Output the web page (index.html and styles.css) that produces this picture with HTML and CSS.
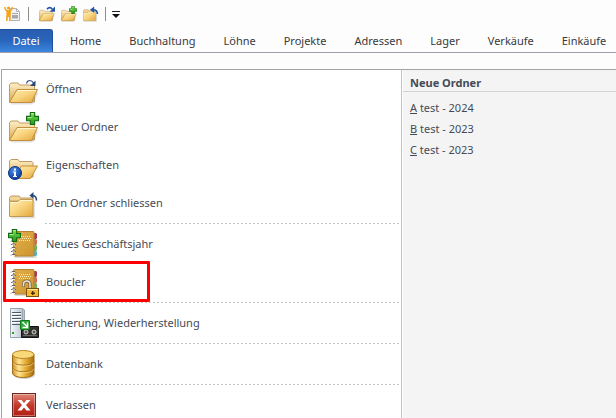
FILE: index.html
```
<!DOCTYPE html>
<html lang="de">
<head>
    <meta charset="UTF-8">
    <meta name="viewport" content="width=device-width, initial-scale=1.0">
    <title>Datei</title>
    <link rel="stylesheet" href="styles.css">
</head>
<body>
    <!-- Gemeinsame Symbole -->
    <svg class="defs" aria-hidden="true">
        <defs>
            <linearGradient id="gold" x1="0" y1="0" x2="1" y2="1">
                <stop offset="0" stop-color="#fff0b8"/>
                <stop offset=".5" stop-color="#f8d37c"/>
                <stop offset="1" stop-color="#e2a53c"/>
            </linearGradient>
            <linearGradient id="paper" x1="0" y1="0" x2="0" y2="1">
                <stop offset="0" stop-color="#fff0c8"/>
                <stop offset="1" stop-color="#d9a850"/>
            </linearGradient>
            <linearGradient id="green" x1="0" y1="0" x2="0" y2="1">
                <stop offset="0" stop-color="#7ee04c"/>
                <stop offset="1" stop-color="#1c9a1c"/>
            </linearGradient>
            <linearGradient id="leather" x1="0" y1="0" x2="1" y2="1">
                <stop offset="0" stop-color="#e3b04c"/>
                <stop offset="1" stop-color="#cc942e"/>
            </linearGradient>
            <linearGradient id="drum" x1="0" y1="0" x2="1" y2="0">
                <stop offset="0" stop-color="#d0911c"/>
                <stop offset=".3" stop-color="#ffe596"/>
                <stop offset=".6" stop-color="#e8ae35"/>
                <stop offset="1" stop-color="#a86c0c"/>
            </linearGradient>
            <linearGradient id="steel" x1="0" y1="0" x2="1" y2="0">
                <stop offset="0" stop-color="#f4f8fb"/>
                <stop offset="1" stop-color="#b4c0cc"/>
            </linearGradient>
            <linearGradient id="red" x1="0" y1="0" x2="0" y2="1">
                <stop offset="0" stop-color="#e08a7c"/>
                <stop offset=".5" stop-color="#c53a2a"/>
                <stop offset="1" stop-color="#b01c10"/>
            </linearGradient>
            <radialGradient id="blue" cx=".4" cy=".3" r=".7">
                <stop offset="0" stop-color="#4a8ce8"/>
                <stop offset="1" stop-color="#0a3c9c"/>
            </radialGradient>
        </defs>
        <symbol id="folder-open" viewBox="0 0 32 32">
            <path d="M3 30.500h21l5.500-11" fill="none" stroke="#000" stroke-opacity=".12" stroke-width="2"/>
            <path d="M1.500 29V11.500l1.500-1.500h7l1.500 2h14l1 1v16z" fill="url(#paper)" stroke="#c09a62"/>
            <path d="M9 16.500h20.500l-6 13h-22z" fill="url(#gold)" stroke="#c28f3c" stroke-linejoin="round"/>
            <path d="M9.800 17.500H28" stroke="#fff6d4" fill="none"/>
        </symbol>
        <symbol id="folder-closed" viewBox="0 0 32 32">
            <path d="M3 30.500h23V14" fill="none" stroke="#000" stroke-opacity=".12" stroke-width="2"/>
            <path d="M1.500 14v-3.500l1.500-1.500h8l1.500 2h11l1.500 1v2z" fill="#f3d596" stroke="#c09a62"/>
            <path d="M1.500 14.500h8.500l2-2h13v17h-23.500z" fill="url(#gold)" stroke="#c09a52" stroke-linejoin="round"/>
            <path d="M2.500 15.500H10.500l2-2h11.500" stroke="#fff6d4" fill="none"/>
        </symbol>
        <symbol id="plus" viewBox="0 0 12 12">
            <path d="M4 .5h4V4h3.500v4H8v3.500H4V8H.5V4H4z" fill="url(#green)" stroke="#116b11"/>
            <path d="M5 1.500h2M1.500 5H5" stroke="#b9f59a" fill="none"/>
        </symbol>
        <symbol id="arrow-open" viewBox="0 0 32 32">
            <path d="M18.500 10.500c1-4 5-4 7.500 0" fill="none" stroke="#3c5680" stroke-width="1.200"/>
            <path d="M27.500 7.500V13H22z" fill="#2b4876"/>
        </symbol>
        <symbol id="arrow-close" viewBox="0 0 32 32">
            <path d="M28.500 13.500c0-3.500-1.500-5-4.500-5" fill="none" stroke="#2b4876" stroke-width="1.500"/>
            <path d="M21.500 8.500l4-3.500v7z" fill="#2b4876"/>
        </symbol>
        <symbol id="book" viewBox="0 0 32 32">
            <path d="M7 29h20.500V6" fill="none" stroke="#000" stroke-opacity=".15" stroke-width="2"/>
            <path d="M26 5h2l1 1v4l-1 1h-2z" fill="#a83c54"/>
            <path d="M26 11h2l1 1v4l-1 1h-2z" fill="#d0705c"/>
            <path d="M26 17h2l1 1v4l-1 1h-2z" fill="#6cb45a"/>
            <path d="M26 23h2l1 1v3l-1 1h-2z" fill="#48b4dc"/>
            <rect x="5.500" y="3.500" width="20.500" height="24.500" rx="1" fill="url(#leather)" stroke="#b5842e"/>
            <path d="M11 8.500h11M12 10.500h11M11 12.500h11" stroke="#fff0b8" stroke-dasharray="1 1" fill="none"/>
            <path d="M3 6h4M3 9.500h4M3 13h4M3 16.500h4M3 20h4M3 23.500h4M3 27h4" stroke="#fff" stroke-width="1.500"/>
            <path d="M3 6.500l1-1h3l1 1M3 10l1-1h3l1 1M3 13.500l1-1h3l1 1M3 17l1-1h3l1 1M3 20.500l1-1h3l1 1M3 24l1-1h3l1 1M3 27.500l1-1h3l1 1" stroke="#666" fill="none"/>
        </symbol>
    </svg>

    <div class="quickbar">
        <button class="tool" type="button" aria-label="Neu">
            <svg viewBox="0 0 16 16">
                <path d="M5.500 2.500h7l3 3v9h-10z" fill="#f2f2f4" stroke="#b0b2b6"/>
                <path d="M12.500 2.500v3h3" fill="none" stroke="#b0b2b6"/>
                <path d="M8 7h6v1H8zM8 9h6v3.500H8z" fill="#a4a8ae"/>
                <circle cx="4.500" cy="2" r="1.600" fill="#f3a51c"/>
                <path d="M.8 1C1 3.500 2.500 5 4.500 5S8 3.500 8.500 1" fill="none" stroke="#f3a51c" stroke-width="1.500"/>
                <path d="M2.500 4.500h4.500L6.500 15H5v-4H4l-.5 4H2z" fill="#f3a51c"/>
            </svg>
        </button>
        <span class="divider"></span>
        <button class="tool" type="button" aria-label="Ordner öffnen">
            <svg viewBox="1 2 30 30"><use href="#folder-open" width="32" height="32"/><path d="M16 8c3-4 7-4 10 0" fill="none" stroke="#2456a8" stroke-width="3"/><path d="M31 3v10H21z" fill="#2456a8"/></svg>
        </button>
        <button class="tool" type="button" aria-label="Neuer Ordner">
            <svg viewBox="1 2 30 30"><use href="#folder-open" width="32" height="32"/><use href="#plus" x="16" y="2" width="15" height="15"/></svg>
        </button>
        <button class="tool" type="button" aria-label="Ordner schliessen">
            <svg viewBox="1 2 30 30"><use href="#folder-closed" width="32" height="32"/><path d="M28 17c0-6-3-8-8-8" fill="none" stroke="#2456a8" stroke-width="3"/><path d="M14 9l8-6v12z" fill="#2456a8"/></svg>
        </button>
        <span class="divider"></span>
        <button class="more" type="button" aria-label="Anpassen">
            <svg viewBox="0 0 8 8"><path d="M0 1.500h8" stroke="#222"/><path d="M0 4h8L4 8z" fill="#111"/></svg>
        </button>
    </div>

    <nav class="tabs">
        <button class="tab active" type="button">Datei</button>
        <button class="tab" type="button">Home</button>
        <button class="tab" type="button">Buchhaltung</button>
        <button class="tab" type="button">Löhne</button>
        <button class="tab" type="button">Projekte</button>
        <button class="tab" type="button">Adressen</button>
        <button class="tab" type="button">Lager</button>
        <button class="tab" type="button">Verkäufe</button>
        <button class="tab" type="button">Einkäufe</button>
    </nav>

    <main class="backstage">
        <div class="menu">
            <button class="item" type="button">
                <svg class="icon" viewBox="0 0 32 32"><use href="#folder-open"/><use href="#arrow-open"/></svg>
                Öffnen
            </button>
            <button class="item" type="button">
                <svg class="icon" viewBox="0 0 32 32"><use href="#folder-open"/><use href="#plus" x="18" y="1" width="13" height="13"/></svg>
                Neuer Ordner
            </button>
            <button class="item" type="button">
                <svg class="icon" viewBox="0 0 32 32">
                    <path d="M1.500 28V12l1.500-1.500h7l1.500 2h12.500l1 1V28z" fill="url(#paper)" stroke="#c09a62"/>
                    <path d="M13.500 17h16l-7 12.500H5z" fill="url(#gold)" stroke="#c28f3c" stroke-linejoin="round"/>
                    <circle cx="7" cy="24" r="6.500" fill="url(#blue)" stroke="#0b3684"/>
                    <path d="M6 19.500h2v2H6zM5 22.500h3V27h1v1H5v-1h1v-3.500H5z" fill="#fff"/>
                </svg>
                Eigenschaften
            </button>
            <button class="item" type="button">
                <svg class="icon" viewBox="0 0 32 32"><use href="#folder-closed"/><use href="#arrow-close"/></svg>
                Den Ordner schliessen
            </button>
            <div class="line"></div>
            <button class="item" type="button">
                <svg class="icon" viewBox="0 0 32 32"><use href="#book"/><use href="#plus" x="0" y="1" width="13" height="13"/></svg>
                Neues Geschäftsjahr
            </button>
            <button class="item marked" type="button">
                <svg class="icon" viewBox="0 0 32 32">
                    <use href="#book"/>
                    <path d="M15.500 21v-3c0-4 6.500-4 6.500 0V23" fill="none" stroke="#7a6540" stroke-width="3"/>
                    <path d="M15.500 20.500v-2.500c0-4 6.500-4 6.500 0V23" fill="none" stroke="#e9e2d0" stroke-width="1.500"/>
                    <rect x="18.500" y="22.500" width="12" height="8" fill="#f4b935" stroke="#80530c"/>
                    <path d="M19.500 23.500h10" stroke="#ffe79c"/>
                    <path d="M24 25h1.500v1.500H27V28h-1.500v1H24v-1h-1v-1.500h1z" fill="#4a3208"/>
                </svg>
                Boucler
            </button>
            <div class="line"></div>
            <button class="item" type="button">
                <svg class="icon" viewBox="0 0 32 32">
                    <path d="M2.500 1.500h12l2 1.500v27.500h-14z" fill="url(#steel)" stroke="#98a3ae"/>
                    <path d="M14.500 2v28" stroke="#9aa6b2"/>
                    <path d="M4 5.500h9M4 8.500h9M4 11.500h9M4 14.500h9M4 17.500h9" stroke="#4c5a6a"/>
                    <path d="M4 6.500h9M4 9.500h9M4 12.500h9M4 15.500h9" stroke="#fff"/>
                    <path d="M4 25h2v2H4z" fill="#27a527"/>
                    <path d="M13.500 19.500h17v11h-17z" fill="#30302f" stroke="#151515"/>
                    <path d="M15 28.500h14" stroke="#6a6a68"/>
                    <circle cx="18" cy="25" r="2" fill="#555" stroke="#d8d2c8"/>
                    <circle cx="26" cy="25" r="2" fill="#555" stroke="#d8d2c8"/>
                    <path d="M12.500 13.500h9v9h-9z" fill="#2fae3a" stroke="#127a1c"/>
                    <path d="M14.500 15l5 5M19.500 15.500v5h-5" stroke="#fff" stroke-width="1.500" fill="none"/>
                </svg>
                Sicherung, Wiederherstellung
            </button>
            <div class="line"></div>
            <button class="item" type="button">
                <svg class="icon" viewBox="0 0 32 32">
                    <ellipse cx="16.500" cy="26.500" rx="11" ry="4.500" fill="#000" fill-opacity=".15"/>
                    <path d="M4.500 6.500v18.500c0 6 21.500 6 21.500 0V6.500z" fill="url(#drum)" stroke="#9c6a18"/>
                    <path d="M4.500 13c0 5.500 21.500 5.500 21.500 0M4.500 19.500c0 5.500 21.500 5.500 21.500 0" fill="none" stroke="#a87420"/>
                    <path d="M5 14.500c1 5 20 5 20.500 0M5 21c1 5 20 5 20.500 0" fill="none" stroke="#fff0b0" stroke-opacity=".5"/>
                    <ellipse cx="15.250" cy="6.500" rx="10.750" ry="4" fill="#f8d878" stroke="#b8842a"/>
                </svg>
                Datenbank
            </button>
            <div class="line"></div>
            <button class="item" type="button">
                <svg class="icon" viewBox="0 0 32 32">
                    <rect x="4.500" y="4.500" width="23" height="23" fill="url(#red)" stroke="#6d2a22"/>
                    <rect x="5.500" y="5.500" width="21" height="21" fill="none" stroke="#fff" stroke-opacity=".35"/>
                    <path d="M9.500 11h4l2.500 3 2.500-3h4l-4.500 5 4.500 5.500h-4L16 18.500l-2.500 3h-4L14 16z" fill="#fff"/>
                </svg>
                Verlassen
            </button>
        </div>

        <section class="recent">
            <h2>Neue Ordner</h2>
            <ul>
                <li><a href="#"><u>A</u> test - 2024</a></li>
                <li><a href="#"><u>B</u> test - 2023</a></li>
                <li><a href="#"><u>C</u> test - 2023</a></li>
            </ul>
        </section>
    </main>
</body>
</html>
```
FILE: styles.css
```
*,
*::after {
    box-sizing: border-box;
}

body {
    margin: 0;
    height: 100vh;
    display: flex;
    flex-direction: column;
    overflow: hidden;
    background: #fdfdfe;
    color: #444b56;
    font-family: "Noto Sans", "Open Sans", sans-serif;
    font-size: 11px;
    line-height: 16px;
}

button {
    border: none;
    background: none;
    padding: 0;
    margin: 0;
    color: inherit;
    font: inherit;
    cursor: pointer;
}

svg {
    display: block;
}

.defs {
    position: absolute;
    width: 0;
    height: 0;
}

/* Schnellzugriff */
.quickbar {
    display: flex;
    align-items: center;
    gap: 6px;
    flex: none;
    height: 28px;
    padding: 0 4px;
}

.tool svg {
    width: 16px;
    height: 16px;
}

.divider {
    width: 1px;
    height: 14px;
    background: #8c8c8c;
}

.quickbar .tool:first-child {
    margin-right: 2px;
}

.quickbar .divider:nth-child(2) {
    margin-right: 4px;
}

.more svg {
    width: 8px;
    height: 8px;
}

/* Register */
.tabs {
    display: flex;
    flex: none;
    height: 25px;
    padding-top: 1px;
    border-bottom: 1px solid #9ea1a7;
}

.tab {
    flex: none;
    padding: 0 15px 0 14px;
    color: #3a3a3a;
    padding: 0 14px;
}

.tab.active {
    width: 53px;
    margin-right: 3px;
    padding: 0 11px;
    border: 1px solid #1f4f9f;
    border-left: none;
    border-bottom: none;
    border-radius: 0 3px 0 0;
    background: linear-gradient(#2a5db0, #2866bd 50%, #3c86e0);
    color: #fff;
}

/* Backstage */
.backstage {
    display: grid;
    grid-template-columns: 400px 1fr;
    flex: 1;
    min-height: 0;
    margin: 16px 0 0 1px;
    border-top: 1px solid #a3a3a6;
    border-left: 1px solid #a3a3a6;
}

.menu {
    background: #fff;
    border-right: 1px solid #c4c4c4;
    min-width: 0;
}

.item {
    position: relative;
    display: flex;
    align-items: center;
    gap: 6px;
    width: 100%;
    height: 38px;
    padding-left: 6px;
    text-align: left;
}

.icon {
    flex: none;
    width: 32px;
    height: 32px;
}

.line {
    height: 1px;
    margin: 1px 1px 1px 43px;
    background: repeating-linear-gradient(90deg, #c3c3c3 0 2px, #fff 2px 4px);
}

/* Rahmen um den markierten Eintrag */
.marked::after {
    content: "";
    position: absolute;
    top: -2px;
    left: 1px;
    width: 147px;
    height: 41px;
    border: 3px solid #f00;
    border-radius: 1px;
}

.recent {
    margin-left: 1px;
    background: #f4f4f4;
}

.recent h2 {
    margin: 0;
    padding: 5px 7px 0;
    height: 22px;
    border-bottom: 1px solid #d2d2d2;
    font-size: 11px;
    line-height: 16px;
}

.recent ul {
    list-style: none;
    margin: 5px 0 0;
    padding: 0 7px;
}

.recent li {
    line-height: 21px;
}

.recent a {
    color: inherit;
    text-decoration: none;
}
```
